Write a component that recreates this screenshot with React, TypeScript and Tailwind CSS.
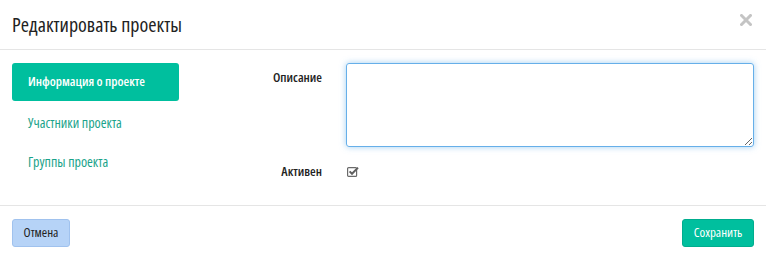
import React from 'react';

function CheckSquare() {
  return (
    <svg width="12" height="11" viewBox="0 0 12 11" className="block">
      <rect x="0.6" y="1.6" width="9" height="8.8" rx="1" fill="none" stroke="#6a6a6a" strokeWidth="1.2" />
      <path d="M2.6 5.4 L5 7.8 L11 1.6" fill="none" stroke="#5f5f5f" strokeWidth="2" />
    </svg>
  );
}

function CloseIcon() {
  return (
    <svg width="12" height="12" viewBox="0 0 12 12" className="block">
      <path d="M1.5 1.5 L10.5 10.5 M10.5 1.5 L1.5 10.5" stroke="#c4c4c4" strokeWidth="3" strokeLinecap="square" />
    </svg>
  );
}

export default function App() {
  return (
    <div className="w-[766px] h-[259px] bg-white flex flex-col text-[#222] font-['Open_Sans',sans-serif] font-stretch-semi-condensed">
      <div className="h-[50px] flex items-center justify-between pl-3 pr-[14px] border-b border-[#e5e5e5]">
        <h4 className="text-[20px] text-[#222]">Редактировать проекты</h4>
        <button className="-mt-[10px]"><CloseIcon /></button>
      </div>
      <div className="flex-1 flex pt-[13px] px-3 border-b border-[#e5e5e5]">
        <nav className="w-[168px] flex flex-col">
          <div className="h-[38px] rounded-[3px] bg-[#00bf9e] text-white font-semibold text-[13px] flex items-center px-4">
            Информация о проекте
          </div>
          <a className="h-[42px] flex items-center px-4 text-[14px] text-[#1aa38a]">Участники проекта</a>
          <a className="h-[36px] flex items-center px-4 text-[14px] text-[#1aa38a]">Группы проекта</a>
        </nav>
        <div className="flex-1 flex flex-col">
          <div className="flex">
            <label className="w-[155px] text-right pr-[12px] pt-[5px] font-semibold text-[13px]">Описание</label>
            <textarea className="ml-[12px] w-[408px] h-[84px] rounded-[3px] border border-[#66afe9] shadow-[0_0_6px_rgba(102,175,233,0.6)] outline-none" />
          </div>
          <div className="flex items-center mt-[15px]">
            <label className="w-[155px] text-right pr-[12px] font-semibold text-[13px]">Активен</label>
            <div className="ml-[13px]"><CheckSquare /></div>
          </div>
        </div>
      </div>
      <div className="h-[53px] flex items-center justify-between px-3">
        <button className="h-[28px] w-[58px] rounded-[3px] bg-[#b6d3f7] border border-[#a0c2ee] text-[13px] text-[#222]">Отмена</button>
        <button className="h-[28px] w-[72px] rounded-[3px] bg-[#00bf9e] border border-[#00ad8e] text-[13px] text-white">Сохранить</button>
      </div>
    </div>
  );
}
